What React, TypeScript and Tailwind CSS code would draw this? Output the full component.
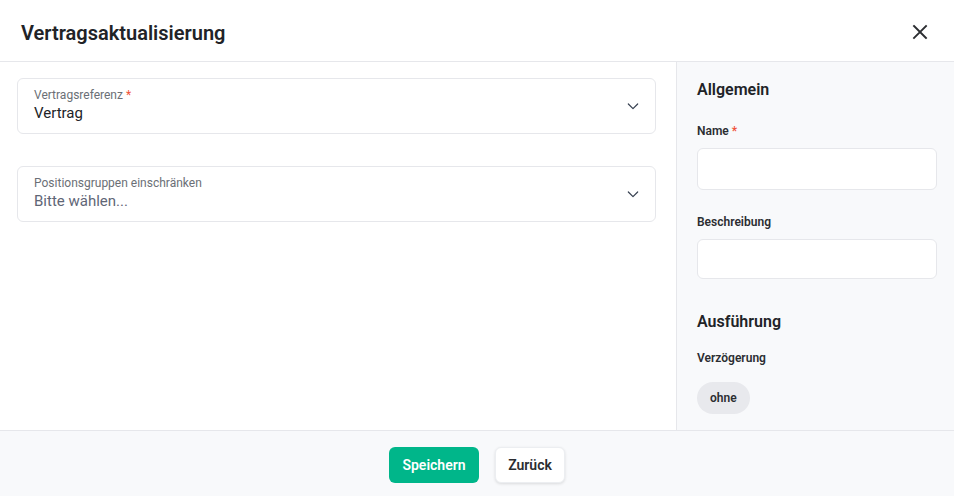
import React from 'react';

const Chevron: React.FC = () => (
  <svg width="16" height="16" viewBox="0 0 24 24" fill="none" stroke="#374151" strokeWidth="1.8" strokeLinecap="round" strokeLinejoin="round">
    <path d="M5 9l7 7 7-7" />
  </svg>
);

const SelectField: React.FC<{ label: string; value: string; required?: boolean; placeholder?: boolean }> = ({
  label,
  value,
  required,
  placeholder,
}) => (
  <div className="flex items-center h-[56px] rounded-md border border-[#e6e7eb] bg-white pl-4 pr-[14px]">
    <div className="flex-1 flex flex-col pb-[3px]">
      <span className="text-xs leading-4 text-[#6b6f76]">
        {label}
        {required && <span className="text-[#f0533a]"> *</span>}
      </span>
      <span className={`text-[15px] leading-5 ${placeholder ? 'text-[#5f6676]' : 'text-[#212327]'}`}>{value}</span>
    </div>
    <Chevron />
  </div>
);

const App: React.FC = () => {
  return (
    <div className="h-[496px] w-full flex flex-col bg-white text-[#212327]" style={{ fontFamily: 'Roboto, "Noto Sans", sans-serif' }}>
      {/* Header */}
      <div className="h-[62px] flex items-center justify-between border-b border-[#e6e7eb] pl-[21px] pr-[22px] shrink-0">
        <h1 className="text-xl font-semibold pt-[4px]">Vertragsaktualisierung</h1>
        <button className="p-1 pt-[6px]">
          <svg width="16" height="16" viewBox="0 0 16 16" fill="none" stroke="#2b2d31" strokeWidth="1.9" strokeLinecap="square">
            <path d="M2 2l12 12M14 2L2 14" />
          </svg>
        </button>
      </div>

      {/* Body */}
      <div className="flex-1 flex min-h-0">
        <div className="flex-1 pl-[17px] pr-5 pt-4 flex flex-col gap-8">
          <SelectField label="Vertragsreferenz" value="Vertrag" required />
          <SelectField label="Positionsgruppen einschränken" value="Bitte wählen..." placeholder />
        </div>

        <div className="w-[278px] shrink-0 border-l border-[#e6e7eb] bg-[#f8f9fb] pl-5 pr-[17px] pt-[16px]">
          <h2 className="text-base leading-6 font-semibold">Allgemein</h2>
          <div className="mt-[21px] text-xs leading-4 font-semibold text-[#2b2d31]">
            Name <span className="text-[#f0533a]">*</span>
          </div>
          <div className="mt-[9px] h-[42px] rounded-md border border-[#e6e7eb] bg-white" />
          <div className="mt-6 text-xs leading-4 font-semibold text-[#2b2d31]">Beschreibung</div>
          <div className="mt-[9px] h-[40px] rounded-md border border-[#e6e7eb] bg-white" />
          <h2 className="mt-[31px] text-base leading-6 font-semibold">Ausführung</h2>
          <div className="mt-4 text-xs leading-4 font-semibold text-[#2b2d31]">Verzögerung</div>
          <div className="mt-[16px] inline-flex items-center h-8 px-[13px] rounded-full bg-[#e8e9ed] text-xs font-semibold text-[#2b2d31]">
            ohne
          </div>
        </div>
      </div>

      {/* Footer */}
      <div className="h-[66px] shrink-0 border-t border-[#e6e7eb] bg-[#f8f9fb] flex items-center justify-center gap-4 pt-[3px]">
        <button className="h-9 w-[90px] rounded-md bg-[#00b68a] text-white text-sm font-semibold">Speichern</button>
        <button className="h-9 w-[70px] rounded-md bg-white text-sm font-semibold text-[#2b2d31] shadow-[0_1px_3px_rgba(0,0,0,0.12)] border border-[#eceef1]">
          Zurück
        </button>
      </div>
    </div>
  );
};

export default App;
